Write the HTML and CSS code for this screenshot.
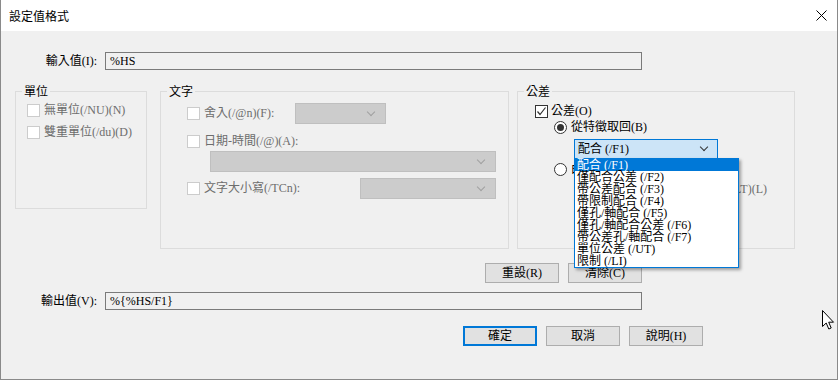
FILE: index.html
```html
<!DOCTYPE html>
<html lang="zh-Hant">
<head>
    <meta charset="UTF-8">
    <title>設定值格式</title>
    <link rel="stylesheet" href="styles.css">
</head>
<body>
<div class="window">
    <div class="titlebar">
        <span class="title">設定值格式</span>
        <svg class="close" width="11" height="11" viewBox="0 0 11 11"><path d="M0.5 0.5 L10.5 10.5 M10.5 0.5 L0.5 10.5" stroke="#000" stroke-width="1" fill="none"/></svg>
    </div>

    <div class="content">
        <div class="field-row input-row">
            <label class="field-label">輸入值(I):</label>
            <div class="textbox">%HS</div>
        </div>

        <div class="groups">
            <fieldset class="group group-unit">
                <legend>單位</legend>
                <div class="group-inner">
                    <div class="check-row disabled"><span class="checkbox"></span><span>無單位(/NU)(N)</span></div>
                    <div class="check-row disabled"><span class="checkbox"></span><span>雙重單位(/du)(D)</span></div>
                </div>
            </fieldset>

            <fieldset class="group group-text">
                <legend>文字</legend>
                <div class="group-inner">
                    <div class="combo-row row-round">
                        <span class="checkbox"></span>
                        <span class="combo-label label-round">舍入(/@n)(F):</span>
                        <div class="combo off combo-round"><span class="chev"></span></div>
                    </div>
                    <div class="check-row disabled row-date"><span class="checkbox"></span><span>日期-時間(/@)(A):</span></div>
                    <div class="combo off combo-date"><span class="chev"></span></div>
                    <div class="combo-row row-case">
                        <span class="checkbox"></span>
                        <span class="combo-label label-case">文字大小寫(/TCn):</span>
                        <div class="combo off combo-case"><span class="chev"></span></div>
                    </div>
                </div>
            </fieldset>

            <fieldset class="group group-tol">
                <legend>公差</legend>
                <div class="group-inner">
                    <div class="check-row row-tol"><span class="checkbox checked"><svg width="11" height="11" viewBox="0 0 11 11"><path d="M1.5 5.5 L4 8.5 L9.5 1.5" stroke="#333" stroke-width="1.2" fill="none"/></svg></span><span>公差(O)</span></div>
                    <div class="check-row row-radio1"><span class="radio on"></span><span>從特徵取回(B)</span></div>
                    <div class="combo-wrap">
                        <div class="combo open"><span class="combo-value">配合 (/F1)</span><span class="chev"></span></div>
                        <ul class="dropdown">
                            <li class="selected">配合 (/F1)</li>
                            <li>僅配合公差 (/F2)</li>
                            <li>帶公差配合 (/F3)</li>
                            <li>帶限制配合 (/F4)</li>
                            <li>僅孔/軸配合 (/F5)</li>
                            <li>僅孔/軸配合公差 (/F6)</li>
                            <li>帶公差孔/軸配合 (/F7)</li>
                            <li>單位公差 (/UT)</li>
                            <li>限制 (/LI)</li>
                        </ul>
                    </div>
                    <div class="check-row row-radio2"><span class="radio"></span><span>由清單選取(S)</span></div>
                    <div class="tol-list disabled">使用公差清單(/LT)(L)</div>
                </div>
            </fieldset>
        </div>

        <div class="button-row mid-buttons">
            <button class="btn">重設(R)</button>
            <button class="btn">清除(C)</button>
        </div>

        <div class="field-row output-row">
            <label class="field-label">輸出值(V):</label>
            <div class="textbox">%{%HS/F1}</div>
        </div>

        <div class="button-row dialog-buttons">
            <button class="btn default">確定</button>
            <button class="btn">取消</button>
            <button class="btn">說明(H)</button>
        </div>
    </div>

    <svg class="cursor" width="13" height="21" viewBox="0 0 13 21"><path d="M0.5 0.5 L0.5 16.5 L4.2 13 L6.8 19 L9.2 18 L6.7 12.2 L11.5 12.2 Z" fill="#fff" stroke="#000" stroke-width="1" stroke-linejoin="miter"/></svg>
</div>
</body>
</html>
```

FILE: styles.css
```css
body { margin: 0; background: #f0f0f0; font-family: "Liberation Serif", "Noto Sans CJK TC", serif; font-size: 12px; color: #000; }
.window { position: relative; width: 838px; height: 380px; box-sizing: border-box; background: #f0f0f0; border: 1px solid #8a8a8a; border-top: none; overflow: hidden; }

.titlebar { height: 31px; background: #fff; display: flex; align-items: center; justify-content: space-between; padding: 0 10px 0 8px; }
.title { font-family: "Noto Sans CJK TC", sans-serif; font-size: 12px; line-height: 31px; }
.close { display: block; margin-top: -1px; }

.content { display: flex; flex-direction: column; }

.field-row { display: flex; align-items: center; height: 18px; }
.input-row { margin-top: 21px; }
.output-row { margin-top: 9px; }
.field-label { width: 96px; text-align: right; margin-right: 8px; line-height: 14px; }
.textbox { width: 537px; height: 18px; box-sizing: border-box; border: 1px solid #7a7a7a; background: #f0f0f0; padding-left: 4px; line-height: 16px; }

.groups { display: flex; align-items: flex-start; margin: 14px 0 0 14px; }
.group { margin: 0; padding: 0; min-width: 0; box-sizing: border-box; border: 1px solid #dcdcdc; }
.group legend { padding: 0 2px; margin-left: 6px; line-height: 14px; font-family: "Noto Sans CJK TC", sans-serif; }
.group-inner { box-sizing: border-box; display: flex; flex-direction: column; align-items: flex-start; }
.group-unit { width: 132px; margin-right: 13px; }
.group-unit .group-inner { height: 110px; padding: 6px 0 0 11px; }
.group-unit .check-row + .check-row { margin-top: 9px; }
.group-text { width: 349px; margin-right: 8px; }
.group-text .group-inner { height: 150px; padding: 5px 0 0 26px; }
.group-tol { width: 278px; }
.group-tol .group-inner { height: 150px; padding: 0 0 0 17px; }

.check-row { display: flex; align-items: center; height: 13px; gap: 4px; line-height: 13px; white-space: nowrap; }
.disabled, .combo-row { color: #6d6d6d; }
.checkbox { width: 13px; height: 13px; box-sizing: border-box; border: 1px solid #cccccc; background: #fff; flex: none; display: flex; align-items: center; justify-content: center; }
.checkbox.checked { border-color: #333; }
.checkbox svg { display: block; }
.radio { width: 13px; height: 13px; box-sizing: border-box; border: 1px solid #333; border-radius: 50%; background: #fff; flex: none; position: relative; }
.radio.on::after { content: ""; position: absolute; left: 2px; top: 2px; width: 7px; height: 7px; border-radius: 50%; background: #333; }

.combo-row { display: flex; align-items: center; height: 21px; white-space: nowrap; }
.combo-label { margin-left: 4px; line-height: 13px; }
.label-round { width: 91px; }
.label-case { width: 156px; }
.row-date { margin-top: 11px; }
.row-case { margin-top: 6px; }

.combo { position: relative; box-sizing: border-box; height: 21px; border: 1px solid #bfbfbf; background: #cccccc; }
.combo.off .chev { border-color: #a0a0a0; }
.combo-round { width: 91px; }
.combo-date { width: 286px; margin: 3px 0 0 23px; height: 21px; }
.combo-case { width: 136px; }
.chev { position: absolute; right: 11px; top: 5px; width: 5px; height: 5px; border-right: 1px solid #333; border-bottom: 1px solid #333; transform: rotate(45deg); }

.row-tol { margin-top: 7px; gap: 3px; }
.row-radio1 { margin: 3px 0 0 19px; }
.row-radio2 { margin: 4px 0 0 19px; }
.combo-wrap { position: relative; margin: 5px 0 0 39px; }
.combo.open { width: 144px; height: 20px; border-color: #0078d7; background: #cce4f7; }
.combo.open .chev { top: 4px; right: 10px; }
.combo-value { display: block; padding-left: 3px; line-height: 18px; white-space: nowrap; }
.tol-list { margin-top: 7px; align-self: stretch; text-align: right; padding-right: 27px; line-height: 13px; white-space: nowrap; }

.dropdown { position: absolute; left: 0; top: 19px; z-index: 10; width: 165px; margin: 0; padding: 0; list-style: none; box-sizing: border-box; border: 1px solid #0078d7; background: #fff; box-shadow: 2px 2px 3px rgba(0, 0, 0, 0.35); }
.dropdown li { height: 12px; line-height: 12px; padding-left: 2px; white-space: nowrap; }
.dropdown li.selected { background: #0078d7; color: #fff; }

.button-row { display: flex; justify-content: flex-end; gap: 9px; }
.mid-buttons { width: 641px; margin-top: 14px; }
.dialog-buttons { width: 702px; margin-top: 16px; }
.btn { width: 74px; height: 20px; box-sizing: border-box; margin: 0; padding: 0; border: 1px solid #adadad; background: #e1e1e1; font-family: "Liberation Serif", "Noto Sans CJK TC", serif; font-size: 12px; line-height: 16px; color: #000; }
.btn.default { border: 2px solid #0078d7; }

.cursor { position: absolute; left: 821px; top: 310px; }
```
